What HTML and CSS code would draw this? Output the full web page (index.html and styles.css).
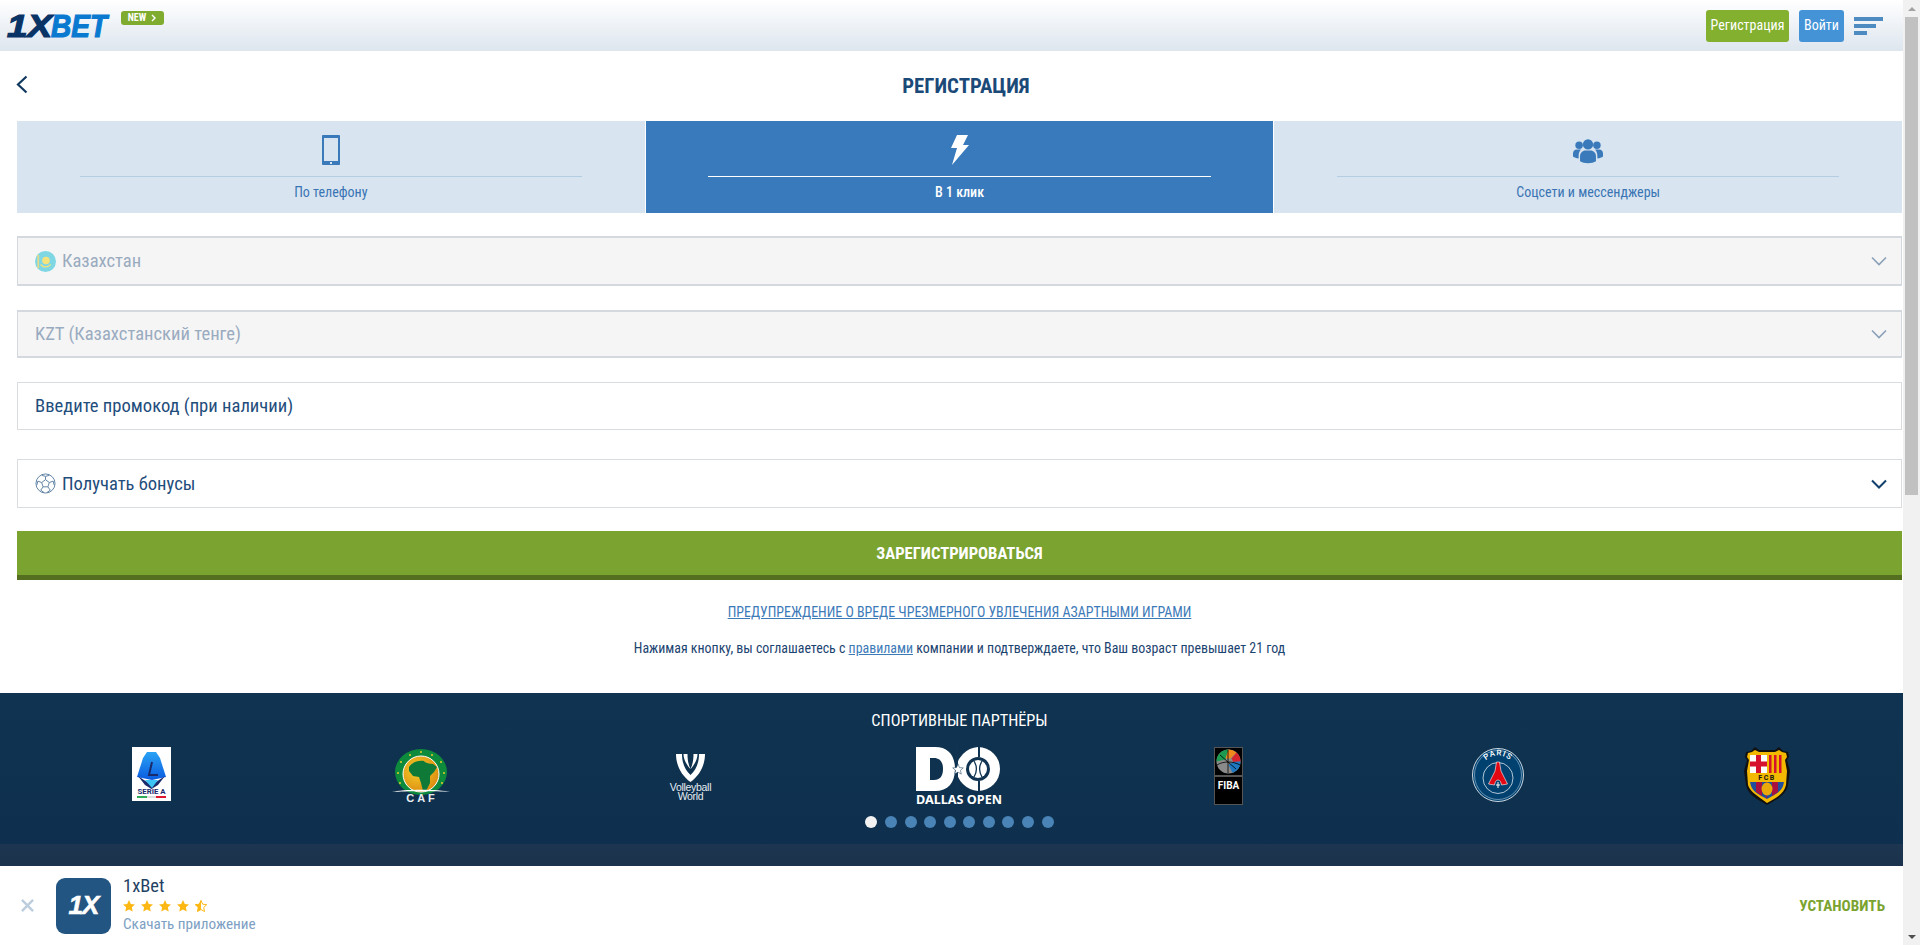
FILE: index.html
```html
<!DOCTYPE html>
<html lang="ru">
<head>
<meta charset="utf-8">
<title>1XBET — Регистрация</title>
<link rel="stylesheet" href="styles.css">
</head>
<body>
<header class="topbar">
  <div class="brand">
    <svg class="logo" viewBox="0 0 102 24" aria-label="1XBET"><text x="-1" y="23" class="logo-dark" textLength="45" lengthAdjust="spacingAndGlyphs">1X</text><text x="43" y="23" class="logo-blue" textLength="56" lengthAdjust="spacingAndGlyphs">BET</text></svg>
    <a class="new-badge">NEW
      <svg viewBox="0 0 6 8" class="new-arrow"><path d="M1 1l3 3-3 3" fill="none" stroke="#fff" stroke-width="1.4"/></svg>
    </a>
  </div>
  <div class="top-actions">
    <a class="btn-top btn-reg">Регистрация</a>
    <a class="btn-top btn-login">Войти</a>
    <div class="burger"><i class="b1"></i><i class="b2"></i><i class="b3"></i></div>
  </div>
</header>

<main class="content">
  <div class="page-head">
    <svg class="back" viewBox="0 0 12 19"><path d="M10.5 1.5L2 9.5l8.500 8" fill="none" stroke="#10385f" stroke-width="2.200"/></svg>
    <h1 class="page-title">РЕГИСТРАЦИЯ</h1>
  </div>

  <nav class="tabs">
    <a class="tab">
      <svg class="tab-icon" viewBox="0 0 18 30"><rect x="1" y="1" width="16" height="28" rx="1.500" fill="none" stroke="#3a7aba" stroke-width="2"/><rect x="0" y="0" width="18" height="3" rx="1" fill="#3a7aba"/><rect x="0" y="26" width="18" height="4" rx="1" fill="#3a7aba"/><rect x="8" y="27" width="2" height="2" fill="#d8e5f0"/></svg>
      <span class="tab-line"></span>
      <span class="tab-label">По телефону</span>
    </a>
    <a class="tab tab-active">
      <svg class="tab-icon" viewBox="0 0 18 30"><path d="M6 0h11l-5 10h6L1 30l5-17H0z" fill="#fff"/></svg>
      <span class="tab-line"></span>
      <span class="tab-label">В 1 клик</span>
    </a>
    <a class="tab">
      <svg class="tab-icon tab-icon-wide" viewBox="0 0 32 30"><g fill="#3a7aba"><circle cx="16" cy="9" r="5.500"/><path d="M7.500 27v-5.500c0-3.500 3-6 5.500-6h6c2.500 0 5.500 2.500 5.500 6V27c-2 1.300-5 2-8.500 2s-6.500-.7-8.500-2z"/><circle cx="6.500" cy="10" r="4"/><circle cx="25.500" cy="10" r="4"/><path d="M0 22v-3.500C0 16 2 14.500 4 14.500h4.500c-1.500 1.500-2.500 4-2.500 7v2.500c-2.500-.2-4.500-1-6-2z"/><path d="M32 22v-3.500c0-2.500-2-4-4-4h-4.500c1.500 1.500 2.500 4 2.500 7v2.500c2.500-.2 4.500-1 6-2z"/></g></svg>
      <span class="tab-line"></span>
      <span class="tab-label">Соцсети и мессенджеры</span>
    </a>
  </nav>

  <form class="form">
    <div class="field field-locked field-country">
      <svg class="field-icon" viewBox="0 0 22 22"><circle cx="11" cy="11" r="11" fill="#7fd7e4"/><circle cx="11.500" cy="10" r="4" fill="#f4e27c"/><path d="M6 14c2 3.500 8 3.500 10.500 0" fill="none" stroke="#f4e27c" stroke-width="1.300"/><rect x="2.500" y="4" width="1.800" height="14" fill="#e7d98a"/></svg>
      <span class="field-text">Казахстан</span>
      <svg class="chev" viewBox="0 0 16 10"><path d="M1 1.500l7 7 7-7" fill="none" stroke="#8aa0b8" stroke-width="1.600"/></svg>
    </div>
    <div class="field field-locked field-currency">
      <span class="field-text">KZT (Казахстанский тенге)</span>
      <svg class="chev" viewBox="0 0 16 10"><path d="M1 1.500l7 7 7-7" fill="none" stroke="#8aa0b8" stroke-width="1.600"/></svg>
    </div>
    <div class="field field-promo">
      <span class="field-text">Введите промокод (при наличии)</span>
    </div>
    <div class="field field-bonus">
      <svg class="field-icon" viewBox="0 0 22 22"><g fill="none" stroke="#5b7fa3" stroke-width="1"><circle cx="11" cy="11" r="10"/><path d="M11 7l4 3-1.500 4.500h-5L7 10z"/><path d="M11 7V3.500M15 10l4-1.500M13.500 14.500l2.500 3.500M8.500 14.500L6 18M7 10L3 8.500M7 2.500l4 1 4-1M19 8.500l1 4M16 18l-3.500 2.500M6 18l3.500 2.500M3 8.500l-1 4"/></g></svg>
      <span class="field-text">Получать бонусы</span>
      <svg class="chev" viewBox="0 0 16 10"><path d="M1 1.500l7 7 7-7" fill="none" stroke="#12406c" stroke-width="2"/></svg>
    </div>
    <button type="button" class="submit">ЗАРЕГИСТРИРОВАТЬСЯ</button>
  </form>

  <p class="warning"><a>ПРЕДУПРЕЖДЕНИЕ О ВРЕДЕ ЧРЕЗМЕРНОГО УВЛЕЧЕНИЯ АЗАРТНЫМИ ИГРАМИ</a></p>
  <p class="terms">Нажимая кнопку, вы соглашаетесь с <a>правилами</a> компании и подтверждаете, что Ваш возраст превышает 21 год</p>
</main>

<section class="partners">
  <h2 class="partners-title">СПОРТИВНЫЕ ПАРТНЁРЫ</h2>
  <div class="partner-row">
    <div class="partner">
      <svg class="p-serie" viewBox="0 0 39 54">
        <defs><linearGradient id="sa" x1="0" y1="0" x2="0" y2="1"><stop offset="0" stop-color="#2aa3f5"/><stop offset="1" stop-color="#0a5be0"/></linearGradient></defs>
        <rect width="39" height="54" fill="#fff"/>
        <path d="M15 5h9l4 6 6 19-14 3-15-3 6-19z" fill="url(#sa)"/>
        <path d="M6 29l13.500 9L33 29l-7 9-6.500 4-6.500-4z" fill="#1b2a6b"/>
        <path d="M13 33h13l-6 8z" fill="#3cc4f5"/>
        <path d="M20 15l-3 13h9" fill="none" stroke="#1b2a6b" stroke-width="2"/>
        <text x="19.500" y="47" class="serie-text" textLength="28" lengthAdjust="spacingAndGlyphs">SERIE A</text>
        <rect x="5" y="49" width="10" height="2" fill="#2faa5a"/><rect x="15" y="49" width="9" height="2" fill="#ddd"/><rect x="24" y="49" width="10" height="2" fill="#e0182d"/>
      </svg>
    </div>
    <div class="partner">
      <svg class="p-caf" viewBox="0 0 58 54">
        <defs><radialGradient id="cg" cx=".4" cy=".4" r=".7"><stop offset="0" stop-color="#f6cf2a"/><stop offset="1" stop-color="#d9860f"/></radialGradient></defs>
        <ellipse cx="29" cy="23" rx="26" ry="23" fill="#0e8a3c"/>
        <circle cx="29" cy="3" r="1" fill="#e9c92d"/><circle cx="18" cy="6" r="1" fill="#e9c92d"/><circle cx="40" cy="6" r="1" fill="#e9c92d"/><circle cx="9" cy="13" r="1" fill="#e9c92d"/><circle cx="49" cy="13" r="1" fill="#e9c92d"/><circle cx="6" cy="24" r="1" fill="#e9c92d"/><circle cx="52" cy="24" r="1" fill="#e9c92d"/><circle cx="8" cy="34" r="1" fill="#e9c92d"/><circle cx="50" cy="34" r="1" fill="#e9c92d"/>
        <circle cx="29" cy="25" r="18" fill="url(#cg)" stroke="#fff" stroke-width="1"/>
        <path d="M17 18c3-5 10-7 15-6 1 2 6 3 9 3l4 3-3 5-4 4 0 7-4 8-3 0-2-8-2-6-6-1-4-5z" fill="#0f7a38"/>
        <path d="M0 43c10-3 48-3 58 0-14-1-44-1-58 0z" fill="#fff"/>
        <text x="30" y="53" class="caf-text">CAF</text>
      </svg>
    </div>
    <div class="partner">
      <svg class="p-vb" viewBox="0 0 45 46">
        <path d="M8 0h6c0 9 3 16 8.500 21C28 16 31 9 31 0h6c0 12-6 22-14.500 28C14 22 8 12 8 0z" fill="#fff"/>
        <path d="M15.500 0h4c0 6 1 11 3 15-3-3-7-9-7-15zM25.500 0h4c0 6-4 12-7 15 2-4 3-9 3-15z" fill="#fff"/>
        <text x="22.500" y="37" class="vb-text">Volleyball</text>
        <text x="22.500" y="45.500" class="vb-text">World</text>
      </svg>
    </div>
    <div class="partner">
      <svg class="p-dallas" viewBox="0 0 86 58">
        <path d="M0 0h19c13 0 20 8 20 22s-7 22-20 22H0zM14 11v22h4c6 0 9-4 9-11s-3-11-9-11z" fill="#fff"/>
        <path d="M62 0a22 22 0 0 1 0 44a24 24 0 0 1-22-22a24 24 0 0 1 22-22z" fill="#fff"/>
        <circle cx="62" cy="22" r="12" fill="#0f3350"/>
        <circle cx="62" cy="22" r="9" fill="#fff"/>
        <path d="M58 14c3 5 3 11 0 16M66 14c-3 5-3 11 0 16" fill="none" stroke="#0f3350" stroke-width="1.300"/>
        <rect x="40" y="0" width="2" height="44" fill="#0f3350"/>
        <path d="M62 0h2v10h-2zM62 34h2v10h-2z" fill="#0f3350"/>
        <path d="M42 17l1.500 3.600 3.800.3-2.900 2.500.9 3.700-3.300-2-3.300 2 .9-3.700-2.900-2.500 3.800-.3z" fill="#fff" stroke="#0f3350" stroke-width=".5"/>
        <text x="0" y="57" class="dallas-text" textLength="86" lengthAdjust="spacingAndGlyphs">DALLAS OPEN</text>
      </svg>
    </div>
    <div class="partner">
      <svg class="p-fiba" viewBox="0 0 29 58">
        <rect x=".5" y=".5" width="28" height="28" fill="#000" stroke="#555"/>
        <rect x=".5" y="29.500" width="28" height="28" fill="#000" stroke="#555"/>
        <circle cx="14.500" cy="14.500" r="12" fill="#8a8a8a"/>
        <path d="M14.500 2.500a12 12 0 0 0-12 12l9-2 3-10z" fill="#1c9a4f"/>
        <path d="M14.500 2.500a12 12 0 0 1 8 3l-6 6-5 0z" fill="#f08a1d"/>
        <path d="M22.500 5.500a12 12 0 0 1 4 9l-7 1-2-4z" fill="#d8242c"/>
        <path d="M26.500 14.500a12 12 0 0 1-8 11.300l-4-8 5-3z" fill="#1e78c2"/>
        <path d="M6 8l16 14M14 3v23M3 18c6-4 16-4 23 0" fill="none" stroke="#000" stroke-width=".8"/>
        <text x="14.500" y="42" class="fiba-text">FIBA</text>
      </svg>
    </div>
    <div class="partner">
      <svg class="p-psg" viewBox="0 0 52 54">
        <ellipse cx="26" cy="27" rx="25.500" ry="26.500" fill="#004170" stroke="#fff" stroke-width=".8"/>
        <ellipse cx="26" cy="27" rx="23.500" ry="24.500" fill="none" stroke="#cfe0ee" stroke-width=".5"/>
        <ellipse cx="26" cy="30" rx="15" ry="15.500" fill="none" stroke="#fff" stroke-width=".7"/>
        <path d="M24.500 14l3 0 1.500 9 6.500 13-6 1c-.5-3-1.500-5-3.500-5s-3 2-3.500 5l-6-1 6.500-13z" fill="#e30613" stroke="#fff" stroke-width=".6"/>
        <path d="M26 34v6M24 37h4" stroke="#fff" stroke-width="1"/>
        <path id="psg-arc" d="M8.500 25a17.500 17.500 0 0 1 35 0" fill="none"/>
        <text class="psg-text"><textPath href="#psg-arc" startOffset="50%">PARIS</textPath></text>
      </svg>
    </div>
    <div class="partner">
      <svg class="p-fcb" viewBox="1 0 48 58">
        <path d="M4 5l5-1 4-4 4 3h16l4-3 4 4 5 1 1 5-2 3 3 11-2 14c-2 10-11 14-21 20C15 52 6 48 4 38L2 24l3-11-2-3z" fill="#111"/>
        <path d="M6 6l4-1 3-2 4 2h16l4-2 3 2 4 1 1 4-2 3 2 11-1 14c-2 9-10 13-19 18C16 49 8 45 6 38L5 24l2-11-2-3z" fill="#f3b800"/>
        <rect x="8" y="8" width="17" height="18" fill="#fff"/>
        <rect x="14" y="8" width="5" height="18" fill="#d5112e"/><rect x="8" y="14.500" width="17" height="5" fill="#d5112e"/>
        <rect x="25" y="8" width="17" height="18" fill="#f3b800"/>
        <path d="M27 8h2.500v18H27zM32 8h2.500v18H32zM37 8h2.500v18H37z" fill="#d5112e"/>
        <text x="25" y="33" class="fcb-text">FCB</text>
        <path d="M8 35h34l-1 4c-2 6-9 9-16 13-7-4-14-7-16-13z" fill="#1f4e9c"/>
        <path d="M14 35h6v14l-6-4zM30 35h6v10l-6 4zM25 35h-1v16h1z" fill="#a7103f"/>
        <ellipse cx="25" cy="42" rx="5.500" ry="6.500" fill="#eaa90b"/>
      </svg>
    </div>
  </div>
  <div class="dots"><i class="dot dot-on"></i><i class="dot"></i><i class="dot"></i><i class="dot"></i><i class="dot"></i><i class="dot"></i><i class="dot"></i><i class="dot"></i><i class="dot"></i><i class="dot"></i></div>
</section>
<section class="lower"></section>

<aside class="app-bar">
  <svg class="app-close" viewBox="0 0 14 14"><path d="M1 1l12 12M13 1L1 13" stroke="#bccddd" stroke-width="2.600"/></svg>
  <div class="app-icon"><span class="app-icon-text">1X</span></div>
  <div class="app-info">
    <div class="app-name">1xBet</div>
    <div class="stars">
      <svg class="star" viewBox="0 0 12 12"><path d="M6 0l1.800 3.900 4.200.5-3.100 2.900.8 4.200L6 9.400 2.300 11.500l.8-4.200L0 4.400l4.200-.5z" fill="#fdb813"/></svg>
      <svg class="star" viewBox="0 0 12 12"><path d="M6 0l1.800 3.900 4.200.5-3.100 2.900.8 4.200L6 9.400 2.300 11.500l.8-4.200L0 4.400l4.200-.5z" fill="#fdb813"/></svg>
      <svg class="star" viewBox="0 0 12 12"><path d="M6 0l1.800 3.900 4.200.5-3.100 2.900.8 4.200L6 9.400 2.300 11.500l.8-4.200L0 4.400l4.200-.5z" fill="#fdb813"/></svg>
      <svg class="star" viewBox="0 0 12 12"><path d="M6 0l1.800 3.900 4.200.5-3.100 2.900.8 4.200L6 9.400 2.300 11.500l.8-4.200L0 4.400l4.200-.5z" fill="#fdb813"/></svg>
      <svg class="star" viewBox="0 0 12 12"><path d="M6 .5l1.700 3.700 4 .5-3 2.800.8 4L6 9.500l-3.500 2 .8-4-3-2.800 4-.5z" fill="none" stroke="#fdb813"/><path d="M6 0v9.400L2.300 11.500l.8-4.200L0 4.400l4.200-.5z" fill="#fdb813"/></svg>
    </div>
    <div class="app-sub">Скачать приложение</div>
  </div>
  <a class="app-install">УСТАНОВИТЬ</a>
</aside>

<div class="scrollbar" aria-hidden="true">
  <div class="sb-btn"><i class="sb-up"></i></div>
  <div class="sb-thumb"></div>
  <div class="sb-fill"></div>
  <div class="sb-btn"><i class="sb-down"></i></div>
</div>
</body>
</html>
```

FILE: styles.css
```css
* { box-sizing: border-box; }
html { overflow: hidden; }

body {
  margin: 0 17px 0 0;
  font-family: Roboto, "Noto Sans", sans-serif;
  font-stretch: 75%;
  color: #1c4470;
  background: #fff;
}
a { color: inherit; text-decoration: none; }

.topbar {
  height: 51px;
  background: linear-gradient(#fff, #dde5ee);
  display: flex;
  justify-content: space-between;
  align-items: flex-start;
}
.brand { display: flex; align-items: flex-start; padding: 11px 0 0 8px; }
.logo { width: 102px; height: 24px; margin-top: 3px; display: block; overflow: visible; }
.logo-dark { font: italic 700 31px "Liberation Sans", sans-serif; fill: #0b3466; stroke: #0b3466; stroke-width: 1.200px; }
.logo-blue { font: italic 700 31px "Liberation Sans", sans-serif; fill: #0a7ad0; stroke: #0a7ad0; stroke-width: 1.200px; }
.new-badge {
  width: 43px; height: 14px; margin-left: 11px;
  background: #7fac2f; border-radius: 3px;
  color: #fff; font-size: 10px; font-weight: 700; line-height: 14px;
  display: flex; align-items: center; justify-content: center; gap: 5px;
}
.new-arrow { width: 6px; height: 8px; }
.top-actions { display: flex; align-items: flex-start; padding: 10px 20px 0 0; }
.btn-top {
  height: 32px; border-radius: 3px; color: #fff; font-size: 14px; line-height: 30px; text-align: center;
}
.btn-reg { width: 83px; background: #83b02f; margin-right: 10px; }
.btn-login { width: 45px; background: #4393d6; margin-right: 10px; }
.burger { width: 29px; padding-top: 7px; display: flex; flex-direction: column; gap: 3px; }
.burger i { display: block; height: 4px; background: #4d8bc1; }
.b1 { width: 29px; }
.b2 { width: 22px; }
.b3 { width: 13px; }

.content { padding: 0 1px 0 17px; height: 642px; }
.page-head { height: 70px; display: flex; align-items: center; }
.back { width: 12px; height: 19px; margin: -4px 0 0 -1px; flex: none; }
.page-title {
  flex: 1; margin: 0; padding-left: 2px; text-align: center;
  font-size: 20.800px; font-weight: 700; color: #1c4a78; line-height: 24px;
}
.tabs { display: flex; height: 92px; gap: 1px; }
.tab {
  flex: 1; background: #d8e5f0; color: #3a74b4;
  display: flex; flex-direction: column; align-items: center; padding-top: 14px;
}
.tab-active { background: #387abb; color: #fff; font-weight: 500; }
.tab-icon { width: 18px; height: 30px; display: block; }
.tab-icon-wide { width: 30px; }
.tab-line { width: 80%; height: 1px; margin-top: 11px; background: #b3cde3; flex: none; }
.tab-active .tab-line { background: #fff; }
.tab-label { font-size: 14px; line-height: 16px; margin-top: 7px; }

.form { padding-top: 23px; display: flex; flex-direction: column; }
.field {
  display: flex; align-items: center; padding: 0 14px 0 17px;
  border: 1px solid #d9dddf; font-size: 18.600px; background: #fff; color: #1f4d7c;
}
.field-text { flex: 1; }
.field-icon { width: 21px; height: 21px; margin-right: 6px; flex: none; }
.chev { width: 16px; height: 10px; flex: none; }
.field-locked { border: 2px solid #d3d9de; border-width: 2px 1px; background: #f5f5f5; color: #9aabc0; }
.field-country { height: 50px; margin-bottom: 24px; }
.field-currency { height: 48px; margin-bottom: 24px; }
.field-promo { height: 48px; margin-bottom: 29px; }
.field-bonus { height: 49px; margin-bottom: 23px; }
.submit {
  height: 49px; border: 0; border-bottom: 5px solid #556f20; background: #7ba32f;
  color: #fff; font: inherit; font-stretch: 75%; font-size: 16.600px; font-weight: 700; padding: 1px 0 0;
}
.warning { margin: 23px 0 0; text-align: center; font-size: 13.900px; line-height: 18px; }
.warning a { color: #3d7ab8; text-decoration: underline; }
.terms { margin: 18px 0 0; text-align: center; font-size: 13.900px; line-height: 18px; color: #1c4470; }
.terms a { color: #3d7ab8; text-decoration: underline; }

.partners { height: 151px; background: linear-gradient(#0f3350, #0e304e); padding: 18px 1px 0 17px; }
.partners-title { margin: 0; text-align: center; font-size: 16.300px; font-weight: 400; line-height: 20px; color: #fff; }
.partner-row { display: flex; height: 60px; margin-top: 16px; }
.partner { flex: 1; display: flex; align-items: center; justify-content: center; }
.partner svg { display: block; overflow: visible; }
.p-serie { width: 39px; height: 54px; margin-top: -6px; }
.p-caf { width: 58px; height: 54px; margin-top: -2px; }
.p-vb { width: 45px; height: 46px; }
.p-dallas { width: 86px; height: 58px; margin-top: -2px; }
.p-fiba { width: 29px; height: 58px; margin-top: -2px; }
.p-psg { width: 52px; height: 54px; margin-top: -4px; }
.p-fcb { width: 50px; height: 58px; margin-top: -3px; }
.serie-text { font: 700 7.500px Roboto, sans-serif; fill: #1b2a6b; text-anchor: middle; }
.caf-text { font: 700 11px "Liberation Sans", sans-serif; fill: #e8edf0; text-anchor: middle; letter-spacing: 3px; }
.vb-text { font: 400 10.500px "Liberation Sans", sans-serif; fill: #e6edf2; text-anchor: middle; letter-spacing: -.3px; }
.dallas-text { font: 700 13px "Noto Sans", sans-serif; fill: #fff; }
.fiba-text { font: 700 10px Roboto, sans-serif; fill: #fff; text-anchor: middle; }
.psg-text { font: 500 8px Roboto, sans-serif; fill: #fff; text-anchor: middle; letter-spacing: 1px; }
.fcb-text { font: 700 7px Roboto, sans-serif; fill: #111; text-anchor: middle; letter-spacing: 1.500px; }
.dots { display: flex; justify-content: center; gap: 7.600px; margin: 9px 0 0 0; }
.dot { width: 12px; height: 12px; border-radius: 50%; background: #4a83b5; }
.dot-on { background: #f2f2f2; }
.lower { height: 101px; background: linear-gradient(#1d3550, #16283f); }

.app-bar {
  position: fixed; left: 0; right: 17px; bottom: 0; height: 79px; background: #fff;
  display: flex; align-items: center; padding: 0 18px 0 21px;
}
.app-close { width: 13px; height: 13px; flex: none; margin-right: 22px; }
.app-icon {
  width: 55px; height: 56px; border-radius: 9px; background: #235583; flex: none;
  display: flex; align-items: center; justify-content: center;
}
.app-icon-text { font: italic 700 26px "Liberation Sans", sans-serif; color: #fff; -webkit-text-stroke: .6px #fff; letter-spacing: -1px; }
.app-info { flex: 1; margin-left: 12px; margin-top: -2px; display: flex; flex-direction: column; }
.app-name { font-size: 18.500px; line-height: 20px; color: #1f3f63; }
.stars { display: flex; gap: 6px; height: 12px; margin-top: 4px; }
.star { width: 12px; height: 12px; display: block; }
.app-sub { font-size: 15.200px; line-height: 18px; margin-top: 3px; color: #7da0c4; }
.app-install { font-size: 15.200px; font-weight: 700; color: #7ba32f; }

.scrollbar {
  position: fixed; top: 0; right: 0; bottom: 0; width: 17px; background: #f1f1f1;
  display: flex; flex-direction: column;
}
.sb-btn { height: 17px; flex: none; display: flex; align-items: center; justify-content: center; }
.sb-up { width: 0; height: 0; border: 4px solid transparent; border-top: 0; border-bottom: 4px solid #a3a3a3; }
.sb-down { width: 0; height: 0; border: 4px solid transparent; border-bottom: 0; border-top: 4px solid #505050; }
.sb-thumb { height: 478px; margin: 0 2px; background: #c1c1c1; flex: none; }
.sb-fill { flex: 1; }
```
